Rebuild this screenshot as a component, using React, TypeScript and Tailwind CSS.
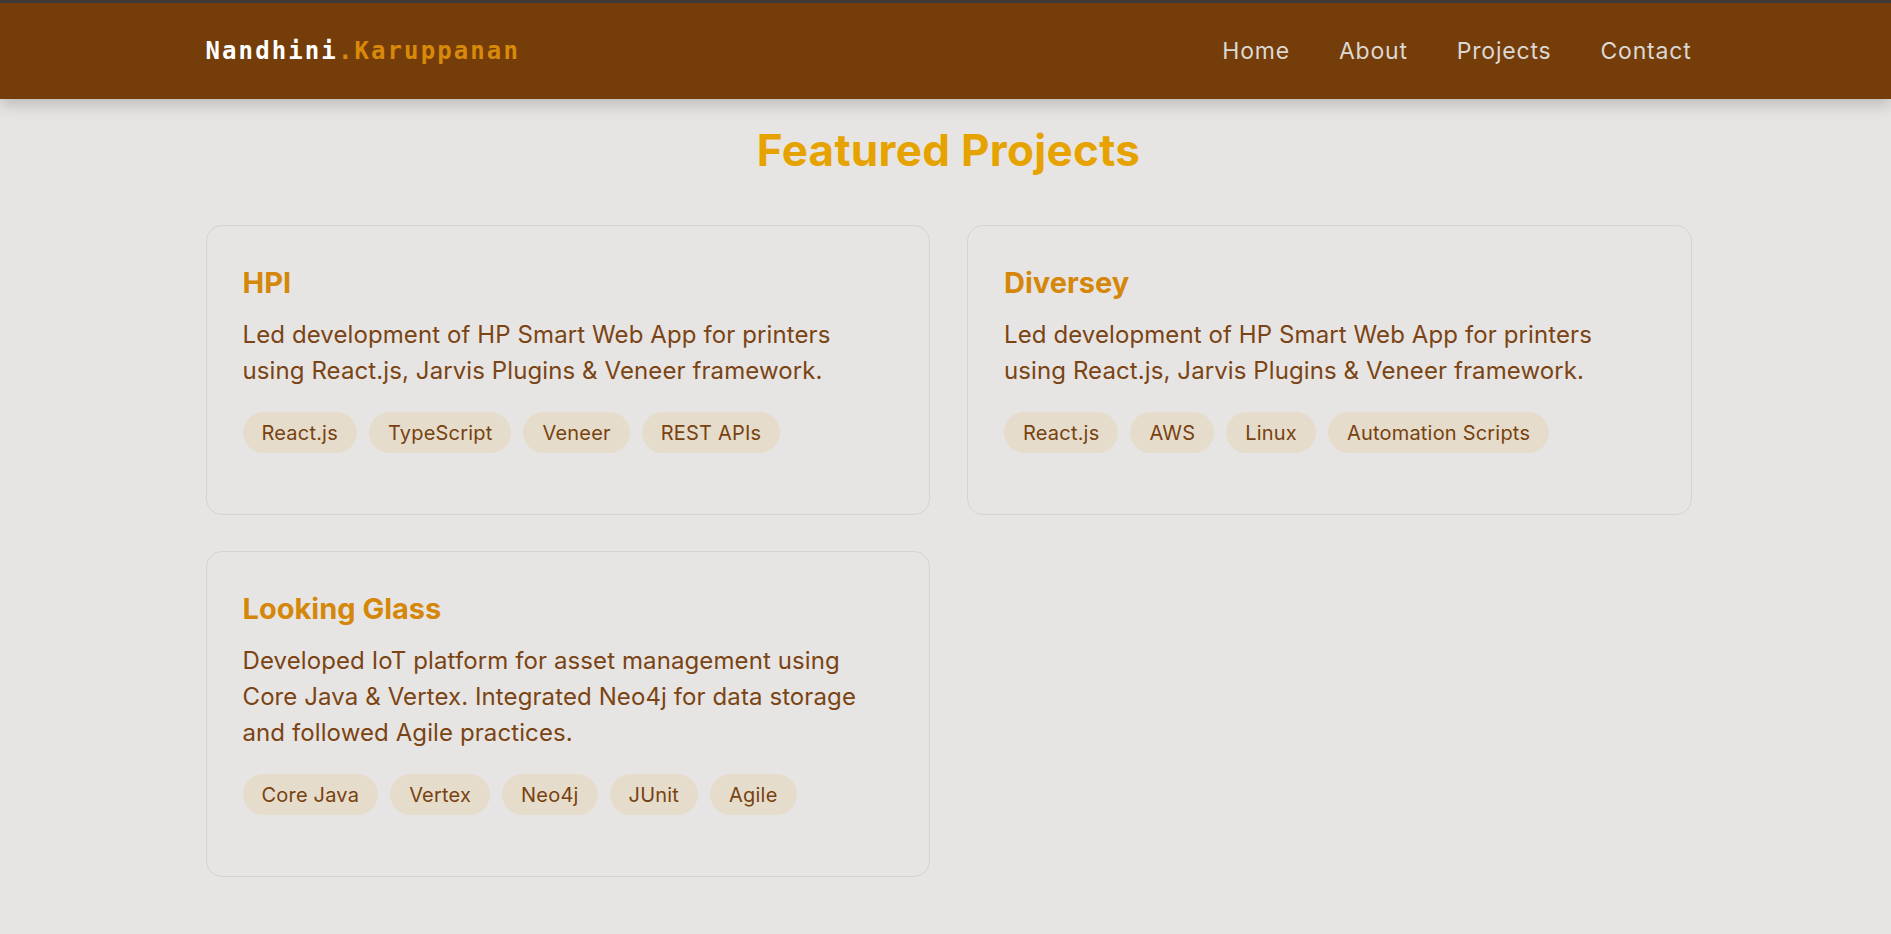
import React from "react";

type Project = {
  title: string;
  description: string;
  tags: string[];
};

const projects: Project[] = [
  {
    title: "HPI",
    description:
      "Led development of HP Smart Web App for printers using React.js, Jarvis Plugins & Veneer framework.",
    tags: ["React.js", "TypeScript", "Veneer", "REST APIs"],
  },
  {
    title: "Diversey",
    description:
      "Led development of HP Smart Web App for printers using React.js, Jarvis Plugins & Veneer framework.",
    tags: ["React.js", "AWS", "Linux", "Automation Scripts"],
  },
  {
    title: "Looking Glass",
    description:
      "Developed IoT platform for asset management using Core Java & Vertex. Integrated Neo4j for data storage and followed Agile practices.",
    tags: ["Core Java", "Vertex", "Neo4j", "JUnit", "Agile"],
  },
];

const navLinks = ["Home", "About", "Projects", "Contact"];

function Header() {
  return (
    <header className="relative z-10 border-t-[3px] border-[#3d3a37] bg-[#743d0a] pl-[6px] shadow-[0_6px_14px_rgba(0,0,0,0.18)]">
      <div className="mx-auto flex h-[96px] w-[1486px] items-center justify-between">
        {/* Logo */}
        <a
          href="#home"
          className="font-['DejaVu_Sans_Mono',monospace] text-[24px] font-bold tracking-[2.1px] text-white"
        >
          Nandhini<span className="text-[#d9890a]">.Karuppanan</span>
        </a>

        <nav className="flex items-center gap-[49px] text-[23px] tracking-[0.8px] text-[#dcd8d3]">
          {navLinks.map((link) => (
            <a key={link} href={`#${link.toLowerCase()}`} className="hover:text-white">
              {link}
            </a>
          ))}
        </nav>
      </div>
    </header>
  );
}

function ProjectCard({ project }: { project: Project }) {
  return (
    <div className="rounded-2xl border border-[#d8d3ce] bg-[#e7e5e3] p-9">
      <h3 className="mb-[16px] pt-[3px] text-[29px] font-bold leading-[36px] text-[#d4870a]">
        {project.title}
      </h3>
      <p className="max-w-[630px] text-[24px] leading-[36px] tracking-[0.1px] text-[#7a4414]">
        {project.description}
      </p>
      <div className="mt-[23px] mb-[25px] flex flex-wrap gap-3">
        {project.tags.map((tag) => (
          <span
            key={tag}
            className="flex h-[41px] items-center rounded-full bg-[#e6dccc] px-[19px] text-[20px] tracking-[0.2px] text-[#77420f]"
          >
            {tag}
          </span>
        ))}
      </div>
    </div>
  );
}

export default function App() {
  return (
    <div className="min-h-screen bg-[#e7e5e3] font-['Inter',sans-serif]">
      <Header />

      <main className="pl-[6px]">
        <section id="projects" className="mx-auto w-[1486px] pt-[24px] pb-16">
          <h2 className="text-center text-[44px] font-bold leading-[55px] tracking-[0.3px] text-[#e6a300]">
            Featured Projects
          </h2>

          {/* Project grid */}
          <div className="mt-[47px] grid grid-cols-2 items-start gap-x-[37px] gap-y-[36px]">
            {projects.map((project) => (
              <ProjectCard key={project.title} project={project} />
            ))}
          </div>
        </section>
      </main>
    </div>
  );
}
